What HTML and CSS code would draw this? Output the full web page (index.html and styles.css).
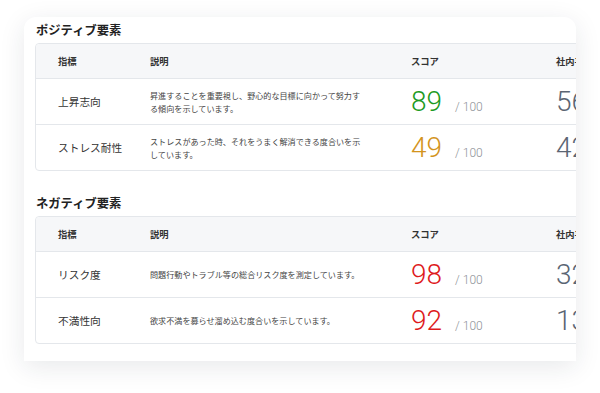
FILE: index.html
```html
<!DOCTYPE html>
<html lang="ja">
<head>
<meta charset="utf-8">
<link rel="stylesheet" href="styles.css">
</head>
<body>
<div class="card">
  <section class="section">
    <h2 class="title">ポジティブ要素</h2>
    <div class="table">
      <div class="row head">
        <div class="cell">指標</div>
        <div class="cell">説明</div>
        <div class="cell">スコア</div>
        <div class="cell">社内平均</div>
      </div>
      <div class="row">
        <div class="cell label">上昇志向</div>
        <div class="cell desc">昇進することを重要視し、野心的な目標に向かって努力する傾向を示しています。</div>
        <div class="cell score"><span class="num green">89</span><span class="max">/ 100</span></div>
        <div class="cell avg">56</div>
      </div>
      <div class="row">
        <div class="cell label">ストレス耐性</div>
        <div class="cell desc">ストレスがあった時、それをうまく解消できる度合いを示しています。</div>
        <div class="cell score"><span class="num orange">49</span><span class="max">/ 100</span></div>
        <div class="cell avg">42</div>
      </div>
    </div>
  </section>
  <section class="section">
    <h2 class="title">ネガティブ要素</h2>
    <div class="table">
      <div class="row head">
        <div class="cell">指標</div>
        <div class="cell">説明</div>
        <div class="cell">スコア</div>
        <div class="cell">社内平均</div>
      </div>
      <div class="row">
        <div class="cell label">リスク度</div>
        <div class="cell desc">問題行動やトラブル等の総合リスク度を測定しています。</div>
        <div class="cell score"><span class="num red">98</span><span class="max">/ 100</span></div>
        <div class="cell avg">32</div>
      </div>
      <div class="row">
        <div class="cell label">不満性向</div>
        <div class="cell desc">欲求不満を募らせ溜め込む度合いを示しています。</div>
        <div class="cell score"><span class="num red">92</span><span class="max">/ 100</span></div>
        <div class="cell avg">13</div>
      </div>
    </div>
  </section>
</div>
</body>
</html>
```

FILE: styles.css
```css
html, body {
  margin: 0;
  padding: 0;
  background: #ffffff;
}
body {
  width: 600px;
  height: 393px;
  overflow: hidden;
  font-family: "Noto Sans CJK JP", "Noto Sans", sans-serif;
  color: #333;
}
.card {
  margin: 17px 24px 0 24px;
  width: 552px;
  box-sizing: border-box;
  background: #fff;
  border-radius: 12px 12px 0 0;
  box-shadow: 0 6px 26px rgba(30, 40, 60, 0.10);
  overflow: hidden;
  padding: 4px 0 17px 11px;
}
.section + .section {
  margin-top: 23px;
}
.title {
  margin: 0 0 4px 1px;
  font-size: 12.3px;
  line-height: 18px;
  font-weight: 700;
  color: #222;
}
.table {
  width: max-content;
  border: 1px solid #e4e7eb;
  border-radius: 4px;
  display: flex;
  flex-direction: column;
}
.row {
  display: grid;
  grid-template-columns: 92px 261px 145px 120px;
  align-items: center;
  height: 45px;
}
.row + .row {
  border-top: 1px solid #e4e7eb;
}
.row.head {
  height: 34px;
  background: #f6f7f9;
  font-size: 9.3px;
  font-weight: 700;
  color: #333;
  border-radius: 4px 4px 0 0;
}
.cell {
  padding-left: 22px;
  white-space: nowrap;
}
.label {
  font-size: 10.7px;
  color: #333;
}
.desc {
  white-space: normal;
  font-size: 8.1px;
  line-height: 13px;
  color: #444;
  max-width: 214px;
}
.score {
  display: flex;
  align-items: baseline;
  font-family: Roboto, "Liberation Sans", sans-serif;
}
.num {
  font-size: 28px;
  font-weight: 300;
  line-height: 30px;
}
.max {
  margin-left: 13px;
  font-size: 12px;
  font-weight: 300;
  color: #8c9096;
}
.green { color: #1c9a22; }
.orange { color: #d3941d; }
.red { color: #de1a1c; }
.avg {
  font-family: Roboto, "Liberation Sans", sans-serif;
  font-size: 28px;
  font-weight: 300;
  line-height: 30px;
  color: #5b6573;
}
```
